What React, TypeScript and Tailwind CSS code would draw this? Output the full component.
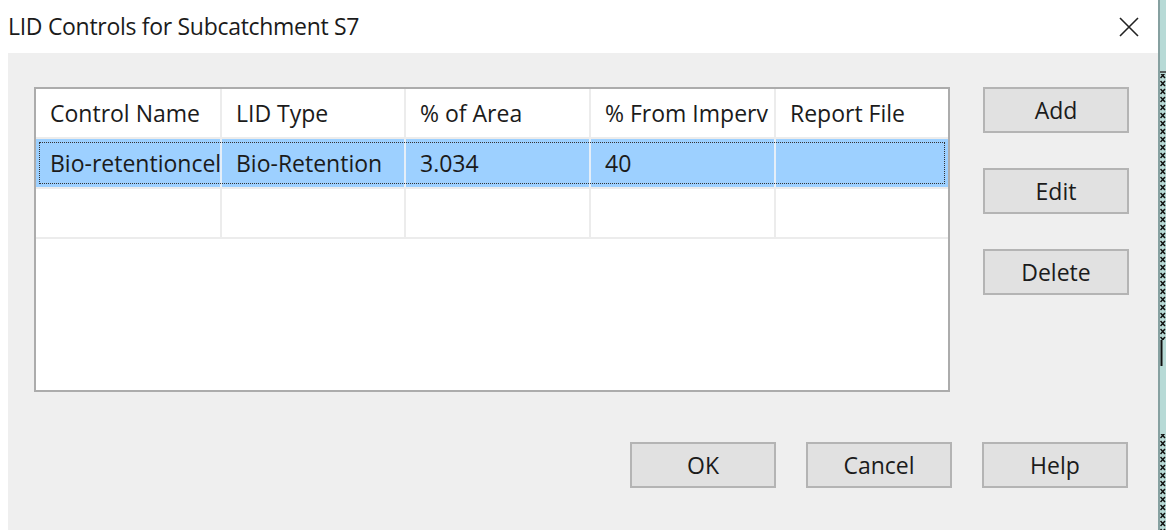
import React from "react";

const columns = [
  { title: "Control Name", width: "w-[186px]" },
  { title: "LID Type", width: "w-[184px]" },
  { title: "% of Area", width: "w-[185px]" },
  { title: "% From Imperv", width: "w-[185px]" },
  { title: "Report File", width: "w-[170px]" },
];

const rows = [["Bio-retentioncell", "Bio-Retention", "3.034", "40", ""]];

function DialogButton({ label }: { label: string }) {
  return (
    <button className="flex h-[46px] w-[146px] items-center justify-center border-2 border-[#b4b4b4] bg-[#e1e1e1] text-[23px] text-[#1b1b1b]">
      {label}
    </button>
  );
}

// dotted background window peeking out behind the dialog
function BackdropStrip() {
  return (
    <div className="flex h-full w-[8px] border-l-2 border-[#86a0a0] bg-[#b7dad6]">
      <svg width="6" height="530" className="block">
        <defs>
          <pattern id="xs" width="6" height="8" patternUnits="userSpaceOnUse">
            <path d="M0.5 1 L5 6 M5 1 L0.5 6" stroke="#111" strokeWidth="1.5" />
          </pattern>
        </defs>
        <path d="M0 72 L6 72" stroke="#333" strokeWidth="1.5" />
        <rect x="0" y="74" width="6" height="266" fill="url(#xs)" />
        <path d="M1.5 340 L1.5 366" stroke="#111" strokeWidth="2" />
        <rect x="0" y="434" width="6" height="96" fill="url(#xs)" />
      </svg>
    </div>
  );
}

export default function App() {
  return (
    <div
      className="flex h-[530px] w-[1166px] overflow-hidden bg-white text-[#1b1b1b]"
      style={{ fontFamily: '"Open Sans", "Noto Sans", sans-serif' }}
    >
      <div className="flex w-[1158px] flex-col">
        {/* Title bar */}
        <div className="flex h-[53px] items-center justify-between bg-white pl-[8px] pr-[18px]">
          <span className="text-[23px] tracking-[-0.3px]">LID Controls for Subcatchment S7</span>
          <svg width="22" height="22" viewBox="0 0 22 22">
            <path d="M2 2 L20 20 M20 2 L2 20" stroke="#222" strokeWidth="1.6" />
          </svg>
        </div>

        {/* Dialog body */}
        <div className="flex flex-1 bg-white pl-[8px]">
          <div className="flex flex-1 flex-col bg-[#efefef] pl-[26px] pt-[34px]">
            <div className="flex gap-[33px]">
              {/* LID list */}
              <div className="h-[305px] w-[916px] border-2 border-[#acacac] bg-white">
                <div className="flex h-[50px] border-b-2 border-[#ececec]">
                  {columns.map((c, i) => (
                    <div
                      key={c.title}
                      className={`${c.width} flex items-center overflow-hidden whitespace-nowrap pl-[14px] text-[23px] ${i < 4 ? "border-r-2 border-[#ececec]" : ""}`}
                    >
                      {c.title}
                    </div>
                  ))}
                </div>
                {rows.map((r) => (
                  <div key={r[0]} className="relative flex h-[50px] border-b-2 border-[#ececec] bg-[#9dd0ff]">
                    {r.map((cell, i) => (
                      <div
                        key={i}
                        className={`${columns[i].width} flex items-center overflow-hidden whitespace-nowrap pl-[14px] text-[23px] ${i < 4 ? "border-r-2 border-[#e4eef8]" : ""}`}
                      >
                        {cell}
                      </div>
                    ))}
                    <div className="pointer-events-none absolute inset-x-[3px] inset-y-[3px] border border-dotted border-[#333]" />
                  </div>
                ))}
                <div className="flex h-[50px] border-b-2 border-[#ececec]">
                  {columns.map((c, i) => (
                    <div key={c.title} className={`${c.width} ${i < 4 ? "border-r-2 border-[#ececec]" : ""}`} />
                  ))}
                </div>
              </div>

              {/* Side buttons */}
              <div className="flex flex-col gap-[35px]">
                <DialogButton label="Add" />
                <DialogButton label="Edit" />
                <DialogButton label="Delete" />
              </div>
            </div>

            {/* Bottom buttons */}
            <div className="mt-[50px] flex justify-end gap-[30px] pr-[30px]">
              <DialogButton label="OK" />
              <DialogButton label="Cancel" />
              <DialogButton label="Help" />
            </div>
          </div>
        </div>
      </div>
      <BackdropStrip />
    </div>
  );
}
